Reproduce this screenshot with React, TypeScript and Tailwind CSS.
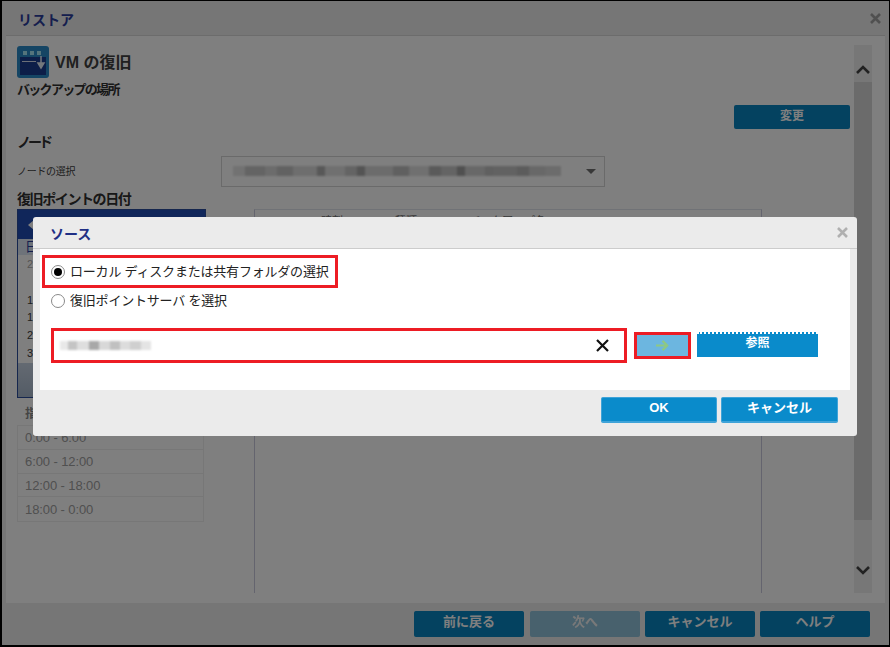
const font = "font-['Liberation_Sans','Noto_Sans_CJK_JP',sans-serif]";

// blurred-out path text, drawn as pixel blocks
const selectBlocks = [
  "w-3 bg-[#e4e4e4]", "w-5 bg-[#c8c8c8]", "w-3 bg-[#d8d8d8]", "w-4 bg-[#c4c4c4]", "w-6 bg-[#dcdcdc]", "w-2 bg-[#b0b0b0]",
  "w-5 bg-[#e0e0e0]", "w-3 bg-[#c8c8c8]", "w-2 bg-[#a8a8a8]", "w-7 bg-[#d8d8d8]", "w-4 bg-[#c0c0c0]", "w-5 bg-[#e0e0e0]",
  "w-3 bg-[#b4b4b4]", "w-4 bg-[#c8c8c8]", "w-2 bg-[#a0a0a0]", "w-5 bg-[#d0d0d0]", "w-2 bg-[#c0c0c0]", "w-6 bg-[#c4c4c4]",
  "w-3 bg-[#b8b8b8]", "w-4 bg-[#d0d0d0]", "w-4 bg-[#d8d8d8]",
];
const pathBlocks = [
  "w-[8px] bg-[#e8e8e8]", "w-[9px] bg-[#c4c4c4]", "w-[12px] bg-[#dedede]", "w-[10px] bg-[#a8a8a8]", "w-[11px] bg-[#d8d8d8]",
  "w-[10px] bg-[#c0c0c0]", "w-[10px] bg-[#dcdcdc]", "w-[11px] bg-[#cfcfcf]", "w-[10px] bg-[#e4e4e4]",
];

const Button = ({ label, className = "" }: { label: string; className?: string }) => (
  <button className={`flex h-[26px] items-center justify-center rounded-[2px] border border-[#3fa3d8] border-b-2 pb-[3px] text-[13px] font-bold text-white ${className}`}>
    {label}
  </button>
);

const Radio = ({ checked = false }: { checked?: boolean }) => (
  <span className="flex h-[14px] w-[14px] items-center justify-center rounded-full border border-[#8a8a8a] bg-white">
    {checked && <span className="h-2 w-2 rounded-full bg-black" />}
  </span>
);

const Chevron = ({ d }: { d: string }) => (
  <svg width="14" height="9" viewBox="0 0 14 9" fill="none" stroke="#444" strokeWidth="2.6">
    <path d={d} />
  </svg>
);

export default function App() {
  return (
    <div className={`relative flex h-[647px] w-[890px] flex-col overflow-hidden border-t border-r border-b-2 border-l-2 border-black bg-[#ececec] ${font}`}>
      {/* Restore window behind the dialog */}
      <div className="flex h-[34px] shrink-0 items-center justify-between pr-[8px] pl-[16px]">
        <h1 className="pt-[4px] text-[14px] font-bold text-[#2a3d9c]">リストア</h1>
        <svg width="11" height="11" viewBox="0 0 11 11" stroke="#a0a0a0" strokeWidth="2.6">
          <path d="M1 1l9 9M10 1l-9 9" />
        </svg>
      </div>

      <div className="mx-[4px] flex h-[568px] shrink-0 border-t border-[#d8d8d8] bg-white pt-[9px]">
        <div className="flex w-[849px] flex-col pt-px pr-[5px] pl-[11px]">
          <div className="flex h-[32px] items-center gap-[6px]">
            <svg width="32" height="32" viewBox="0 0 32 32">
              <rect width="32" height="32" rx="3" fill="#2a8ac8" />
              <rect x="3" y="11" width="26" height="18" fill="#1a3c90" />
              <rect x="6" y="5" width="4" height="4" fill="#a8e8f8" />
              <rect x="13" y="5" width="4" height="4" fill="#a8e8f8" />
              <rect x="20" y="5" width="4" height="4" fill="#a8e8f8" />
              <path d="M24 10v10M21 17l3 5 3-5z" stroke="#e8f0f8" strokeWidth="1.5" fill="#e8f0f8" />
              <rect x="5" y="15" width="14" height="1" fill="#d8e0f0" />
            </svg>
            <span className="pt-[2px] text-[16px] font-bold text-[#404040]">VM の復旧</span>
          </div>
          <h2 className="mt-[4px] text-[13px] leading-[16px] font-bold tracking-[-1.7px] text-[#303030]">バックアップの場所</h2>
          <div className="mt-[7px] flex justify-end">
            <button className="flex h-[24px] w-[116px] items-center justify-center rounded-[2px] bg-[#0884c0] pb-[2px] text-[12px] font-bold text-white">変更</button>
          </div>
          <h2 className="mt-[5px] text-[14px] leading-[16px] font-bold tracking-[-3px] text-[#303030]">ノード</h2>
          <div className="mt-[6px] flex h-[30px] items-center">
            <span className="w-[204px] text-[10px] tracking-[-0.3px] text-[#404040]">ノードの選択</span>
            <div className="flex h-[31px] w-[384px] items-center justify-between border border-[#d4d4d4] pr-[8px] pl-[11px]">
              <div className="flex h-[10px] blur-[1px]">
                {selectBlocks.map((c, i) => (
                  <span key={i} className={c} />
                ))}
              </div>
              <span className="h-0 w-0 border-x-[5px] border-t-[5px] border-x-transparent border-t-[#707070]" />
            </div>
          </div>
          <h2 className="mt-[5px] text-[14px] leading-[16px] font-bold tracking-[-1.4px] text-[#303030]">復旧ポイントの日付</h2>

          <div className="mt-[2px] flex">
            <div className="w-[189px]">
              <div className="flex h-[189px] flex-col border border-[#2a4c9c] bg-white">
                <div className="flex h-[29px] items-center bg-[#204cb4] pl-[10px]">
                  <span className="h-0 w-0 border-y-[5px] border-r-[6px] border-y-transparent border-r-white" />
                </div>
                <div className="flex h-[16px] items-center bg-[#dce6f4] pl-[7px] text-[13px] text-[#2a3d9c]">日</div>
                <div className="flex h-[108px] flex-col pl-[9px] text-[11px] text-[#404040]">
                  <span className="mt-[1px] h-[18px] text-[#aaa]">2</span>
                  <span className="h-[18px]" />
                  <span className="h-[18px]">1</span>
                  <span className="h-[18px]">1</span>
                  <span className="h-[18px]">2</span>
                  <span className="h-[18px]">3</span>
                </div>
                <div className="flex-1 bg-gradient-to-b from-[#c8d4e4] to-[#a8b8cc]" />
              </div>
              <div className="mt-[7px] h-[20px] pl-[8px] text-[12px] font-bold text-[#888]">指定</div>
              <div className="w-[187px] border border-[#eeeeee]">
                {["0:00 - 6:00", "6:00 - 12:00", "12:00 - 18:00", "18:00 - 0:00"].map((t) => (
                  <div key={t} className="flex h-[23.75px] items-center border-b border-[#eeeeee] pt-px pl-[7px] text-[13px] tracking-[-0.1px] text-[#a0a0a0] last:border-b-0">
                    {t}
                  </div>
                ))}
              </div>
            </div>

            <div className="ml-[48px] h-[384px] w-[508px] border-x border-t border-x-[#c8c8dc] border-t-[#e0e4ec]">
              <div className="flex gap-[52px] pt-[3px] pl-[66px] text-[11px] text-[#707070]">
                <span>時刻</span>
                <span>種類</span>
                <span>バックアップ名</span>
              </div>
            </div>
          </div>
        </div>

        {/* scrollbar */}
        <div className="mt-0 ml-[-1px] flex h-[548px] w-[18px] flex-col items-center bg-[#eeeeee]">
          <div className="flex h-[37px] items-end justify-center pb-[8px]">
            <Chevron d="M1 8l6-6 6 6" />
          </div>
          <div className="h-[438px] w-full bg-[#d6d6d6]" />
          <div className="flex h-[73px] items-center justify-center pt-[27px]">
            <Chevron d="M1 1l6 6 6-6" />
          </div>
        </div>
      </div>

      <div className="flex flex-1 items-start justify-end gap-[5px] pt-[8px] pr-[19px]">
        <Button label="前に戻る" className="mr-px w-[110px] border-[#0884c0] bg-[#0884c0]" />
        <Button label="次へ" className="w-[110px] border-[#0884c0] bg-[#0884c0] opacity-40" />
        <Button label="キャンセル" className="w-[110px] border-[#0884c0] bg-[#0884c0]" />
        <Button label="ヘルプ" className="w-[110px] border-[#0884c0] bg-[#0884c0]" />
      </div>

      {/* dim layer + source dialog */}
      <div className="absolute inset-0 bg-black/50" />
      <div className="absolute top-[216px] left-[31px] flex h-[219px] w-[824px] flex-col rounded-[3px] bg-[#ebebeb]">
        <div className="flex h-[32px] shrink-0 items-center justify-between border-b border-[#cccccc] pr-[9px] pl-[17px]">
          <h2 className="pt-[3px] text-[14px] font-bold text-[#1f2f85]">ソース</h2>
          <svg width="11" height="11" viewBox="0 0 11 11" stroke="#b0b0b0" strokeWidth="2.6">
            <path d="M1 1l9 9M10 1l-9 9" />
          </svg>
        </div>

        <div className="mx-[7px] flex h-[141px] shrink-0 flex-col bg-white">
          <div className="mt-[6px] ml-[2px] flex h-[33px] w-[296px] items-center gap-[5px] border-[3px] border-[#ed1c24] pl-[6px] text-[13px] tracking-[-0.2px] text-[#222]">
            <Radio checked />
            <span>ローカル ディスクまたは共有フォルダの選択</span>
          </div>
          <div className="mt-[4px] ml-[11px] flex h-[17px] items-center gap-[5px] text-[13px] tracking-[-0.2px] text-[#222]">
            <Radio />
            <span>復旧ポイントサーバ を選択</span>
          </div>
          <div className="mt-[19px] ml-[11px] flex items-start">
            <div className="flex h-[35px] w-[576px] items-center justify-between border-[3px] border-[#ed1c24] pr-[15px] pl-[6px]">
              <div className="flex h-[9px] blur-[1px]">
                {pathBlocks.map((c, i) => (
                  <span key={i} className={c} />
                ))}
              </div>
              <svg width="13" height="13" viewBox="0 0 13 13" stroke="#111" strokeWidth="2.2">
                <path d="M1 1l11 11M12 1L1 12" />
              </svg>
            </div>
            <div className="mt-[4px] ml-[7px] flex h-[27px] w-[57px] items-center justify-center border-[3px] border-[#ed1c24] bg-[#6cb6e0]">
              <svg width="13" height="13" viewBox="0 0 14 14" fill="none" stroke="#8ec884" strokeWidth="2.4">
                <path d="M0 7h11M7 2l5 5-5 5" />
              </svg>
            </div>
            <button className="mt-[4px] ml-[6px] flex h-[25px] w-[121px] items-center justify-center border-t-2 border-dotted border-t-white bg-[#0a8bcb] pb-[5px] text-[12px] font-bold text-white">
              参照
            </button>
          </div>
        </div>

        <div className="flex justify-end gap-[4px] pt-[7px] pr-[19px]">
          <Button label="OK" className="w-[116px] bg-[#0a8bcb]" />
          <Button label="キャンセル" className="w-[117px] bg-[#0a8bcb]" />
        </div>
      </div>
    </div>
  );
}
